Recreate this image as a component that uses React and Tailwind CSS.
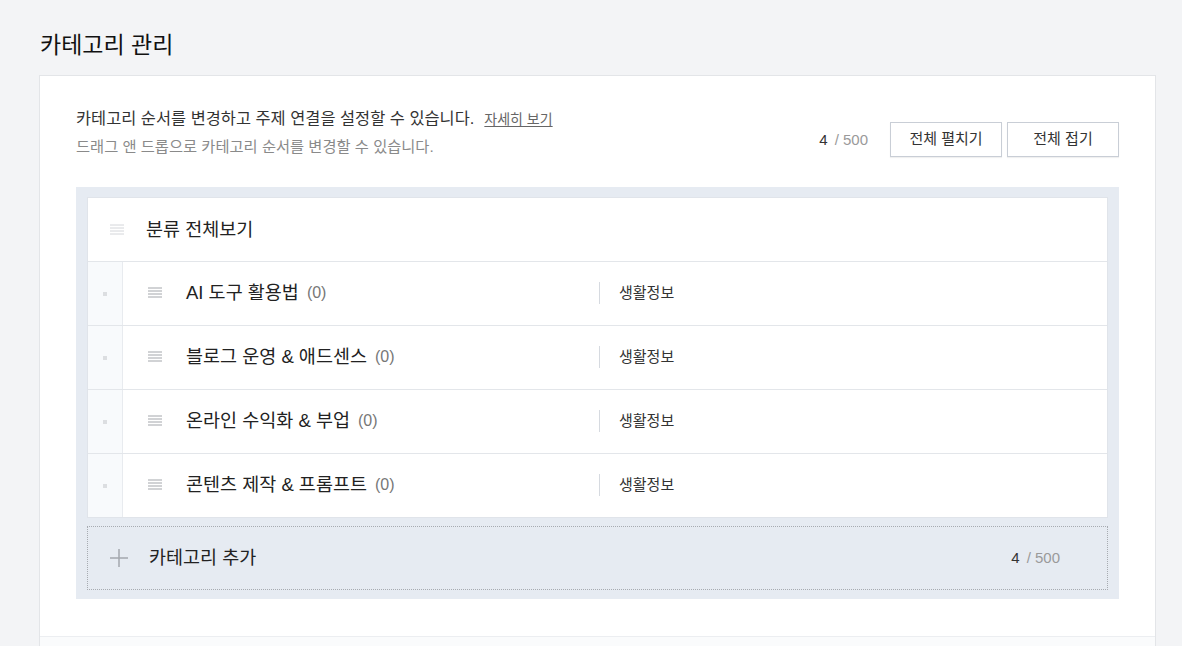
const categories = [
  { name: "AI 도구 활용법", count: 0, topic: "생활정보" },
  { name: "블로그 운영 & 애드센스", count: 0, topic: "생활정보" },
  { name: "온라인 수익화 & 부업", count: 0, topic: "생활정보" },
  { name: "콘텐츠 제작 & 프롬프트", count: 0, topic: "생활정보" },
];

function Handle({ light }) {
  return (
    <svg width="14" height="12" viewBox="0 0 14 12" className="shrink-0">
      {[0.5, 3.5, 6.5, 9.5].map((y) => (
        <line
          key={y}
          x1="0"
          x2="14"
          y1={y + 0.5}
          y2={y + 0.5}
          stroke={light ? "#d4d6da" : "#a3a6ab"}
          strokeWidth="1"
        />
      ))}
    </svg>
  );
}

function Counter() {
  return (
    <span className="text-[15px] text-[#9a9a9a]">
      <span className="text-[#333]">4</span>
      <span className="ml-[7px]">/ 500</span>
    </span>
  );
}

function CategoryRow({ item }) {
  return (
    <div className="flex h-16 border-t border-[#e3e6ea]">
      <div className="flex w-[35px] shrink-0 items-center justify-center border-r border-[#e8ebef] bg-[#f8fafc]">
        <span className="h-1 w-1 bg-[#dcdee1]" />
      </div>
      <div className="flex w-[476px] items-center pb-px">
        <div className="ml-[25px] w-[38px]">
          <Handle />
        </div>
        <span className="text-[18.5px] text-[#222]">{item.name}</span>
        <span className="ml-[8px] text-[16px] text-[#777]">({item.count})</span>
      </div>
      <div className="flex items-center pb-px">
        <span className="h-[22px] w-px bg-[#d6dae0]" />
        <span className="ml-[19px] text-[15px] text-[#333]">{item.topic}</span>
      </div>
    </div>
  );
}

export default function App() {
  return (
    <div
      className="min-h-[646px] bg-[#f3f4f6] pl-[39px] pr-[26px]"
      style={{ fontFamily: '"Liberation Sans", "Noto Sans CJK KR", sans-serif' }}
    >
      <h1 className="pl-px pt-[29px] pb-[14px] text-[23px] leading-[32px] text-[#111]">
        카테고리 관리
      </h1>

      <div className="border border-[#e3e5e8] bg-white">
        <div className="px-9 pt-[31px] pb-[37px]">
          <div className="flex items-end justify-between">
            <div>
              <p className="text-[16.4px] leading-[23px] text-[#333]">
                카테고리 순서를 변경하고 주제 연결을 설정할 수 있습니다.
                <a className="ml-[10px] text-[14px] text-[#666] underline underline-offset-2">
                  자세히 보기
                </a>
              </p>
              <p className="mt-[6px] text-[15.3px] leading-[20px] text-[#8a8a8a]">
                드래그 앤 드롭으로 카테고리 순서를 변경할 수 있습니다.
              </p>
            </div>
            <div className="flex items-center">
              <span className="mr-[22px]">
                <Counter />
              </span>
              <button className="h-[35px] w-[112px] border border-[#c9ced6] bg-white text-[15px] text-[#333] shadow-[0_1px_1px_rgba(0,0,0,0.06)]">
                전체 펼치기
              </button>
              <button className="ml-[5px] h-[35px] w-[112px] border border-[#c9ced6] bg-white text-[15px] text-[#333] shadow-[0_1px_1px_rgba(0,0,0,0.06)]">
                전체 접기
              </button>
            </div>
          </div>

          <div className="mt-[30px] bg-[#e6ebf2] px-[11px] pt-[10px] pb-[9px]">
            <div className="border border-[#e0e4ea] bg-white">
              <div className="flex h-[63px] items-center">
                <div className="ml-[22px] w-[36px]">
                  <Handle light />
                </div>
                <span className="text-[18.5px] text-[#222]">분류 전체보기</span>
              </div>
              {categories.map((item) => (
                <CategoryRow key={item.name} item={item} />
              ))}
            </div>

            <div className="mt-2 flex h-16 items-center border border-dotted border-[#a7abb1] pr-[47px]">
              <svg width="18" height="18" viewBox="0 0 18 18" className="ml-[22px]">
                <path d="M9 0v18M0 9h18" stroke="#a4a8ae" strokeWidth="1.5" />
              </svg>
              <span className="ml-[21px] text-[18.5px] text-[#222]">카테고리 추가</span>
              <span className="ml-auto">
                <Counter />
              </span>
            </div>
          </div>
        </div>
        <div className="h-[40px] border-t border-[#eceef1] bg-[#fafbfc]" />
      </div>
    </div>
  );
}
